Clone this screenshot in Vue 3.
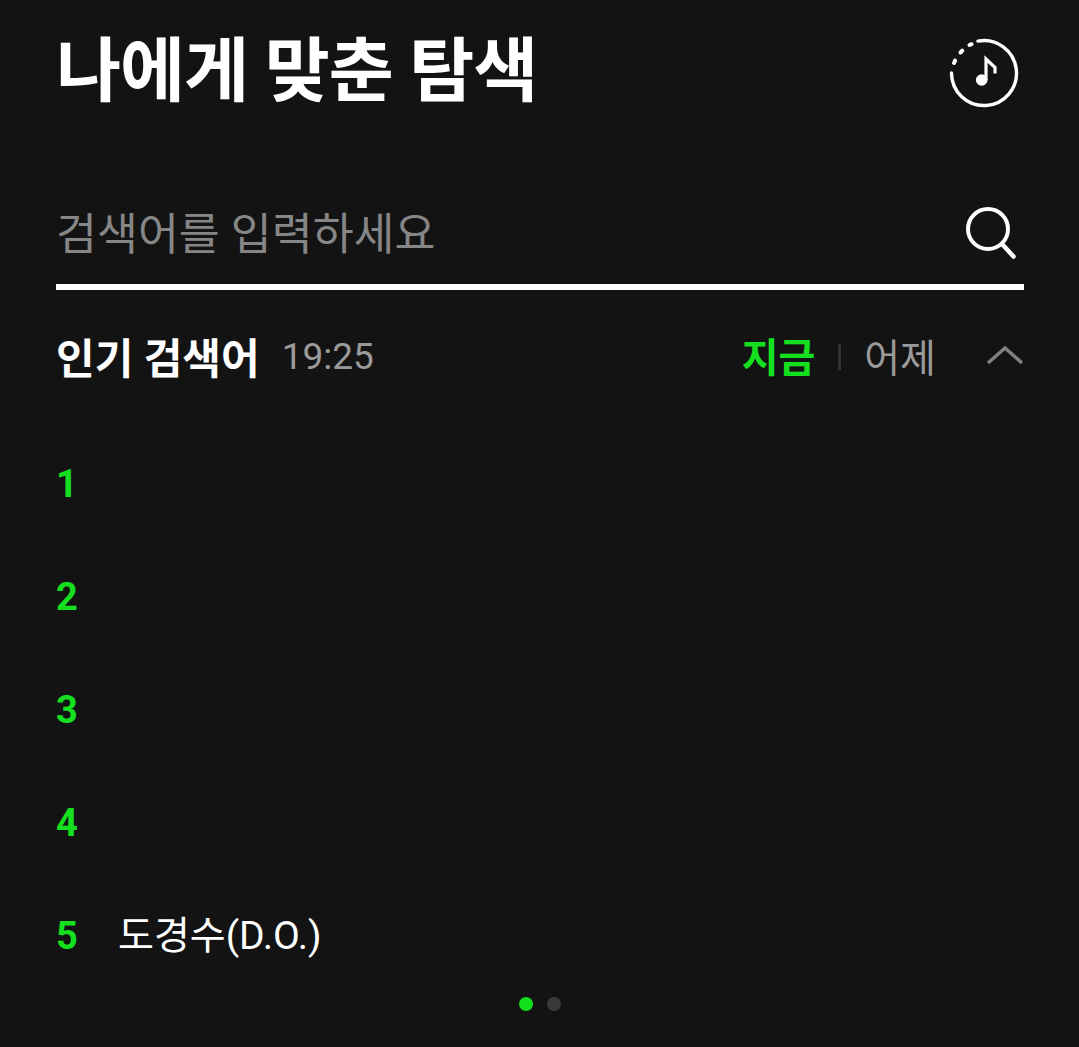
<script setup>
const ranks = [
  { n: 1, text: '' },
  { n: 2, text: '' },
  { n: 3, text: '' },
  { n: 4, text: '' },
  { n: 5, text: '도경수(D.O.)' },
]
</script>

<template>
  <div class="page">
    <header class="head">
      <h1 class="title">나에게 맞춘 탐색</h1>
      <svg class="music" width="70" height="70" viewBox="0 0 70 70" fill="none">
        <path d="M29 3.100A32.500 32.500 0 1 1 2.500 35" stroke="#fff" stroke-width="3.400" stroke-linecap="round"/>
        <path d="M20.500 7l2-.8M11.500 14.500l1.800-1.800M5 25l1-2.300" stroke="#fff" stroke-width="4" stroke-linecap="round"/>
        <circle cx="32.700" cy="42" r="5.800" fill="#fff"/>
        <path d="M37 42V21l9 8.500v6" stroke="#fff" stroke-width="3.200"/>
      </svg>
    </header>

    <div class="search">
      <span class="placeholder">검색어를 입력하세요</span>
      <svg class="glass" width="50" height="52" viewBox="0 0 50 52" fill="none">
        <circle cx="22" cy="22" r="20" stroke="#fff" stroke-width="4"/>
        <path d="M36 37l11.500 12.500" stroke="#fff" stroke-width="4.500" stroke-linecap="round"/>
      </svg>
    </div>

    <div class="bar">
      <div class="bar-left">
        <strong class="bar-title">인기 검색어</strong>
        <span class="time">19:25</span>
      </div>
      <div class="bar-right">
        <span class="now">지금</span>
        <i class="sep"></i>
        <span class="yesterday">어제</span>
        <svg class="chev" width="38" height="20" viewBox="0 0 38 20" fill="none">
          <path d="M2 18L19 3l17 15" stroke="#808080" stroke-width="3.500"/>
        </svg>
      </div>
    </div>

    <ol class="list">
      <li v-for="r in ranks" :key="r.n" class="row">
        <span class="num">{{ r.n }}</span>
        <span class="word">{{ r.text }}</span>
      </li>
    </ol>

    <div class="dots">
      <i class="dot on"></i>
      <i class="dot"></i>
    </div>
  </div>
</template>

<style scoped>
.page {
  box-sizing: border-box;
  height: 1047px;
  padding: 0 55px 0 56px;
  background: #131313;
  color: #fff;
  font-family: Roboto, "Noto Sans CJK KR", sans-serif;
  overflow: hidden;
}
.head {
  display: flex;
  align-items: center;
  justify-content: space-between;
  height: 145px;
}
.title {
  margin: 0;
  font-size: 70.700px;
  font-weight: 700;
  letter-spacing: -1px;
  line-height: 1;
}
.music { margin-right: 5px; }
.search {
  box-sizing: border-box;
  display: flex;
  align-items: center;
  justify-content: space-between;
  height: 145px;
  padding-top: 32px;
  border-bottom: 6px solid #fff;
}
.placeholder {
  font-size: 44.500px;
  color: #868686;
}
.glass { margin: 4px 8px 0 0; }
.bar {
  box-sizing: border-box;
  display: flex;
  align-items: center;
  justify-content: space-between;
  height: 134px;
  padding-bottom: 4px;
}
.bar-left, .bar-right { display: flex; align-items: center; }
.bar-title { font-size: 42px; font-weight: 700; }
.time { margin: 2px 0 0 22px; font-size: 37px; color: #9a9a9a; }
.now { font-size: 40px; font-weight: 700; color: #14e01f; }
.sep { width: 3px; height: 26px; margin: 4px 23px 0 23px; background: #333; }
.yesterday { font-size: 39px; color: #9a9a9a; }
.chev { margin-left: 50px; }
.list {
  margin: 3px 0 0;
  padding: 0;
  list-style: none;
}
.row {
  display: flex;
  align-items: center;
  height: 113px;
}
.num {
  width: 62px;
  font-size: 38px;
  font-weight: 700;
  color: #14e01f;
}
.word { font-size: 39px; margin-top: -8px; }
.dots {
  display: flex;
  justify-content: center;
  gap: 14px;
  margin-top: 5px;
}
.dot {
  width: 14px;
  height: 14px;
  border-radius: 50%;
  background: #3a3a3a;
}
.dot.on { background: #11df1c; }
</style>
